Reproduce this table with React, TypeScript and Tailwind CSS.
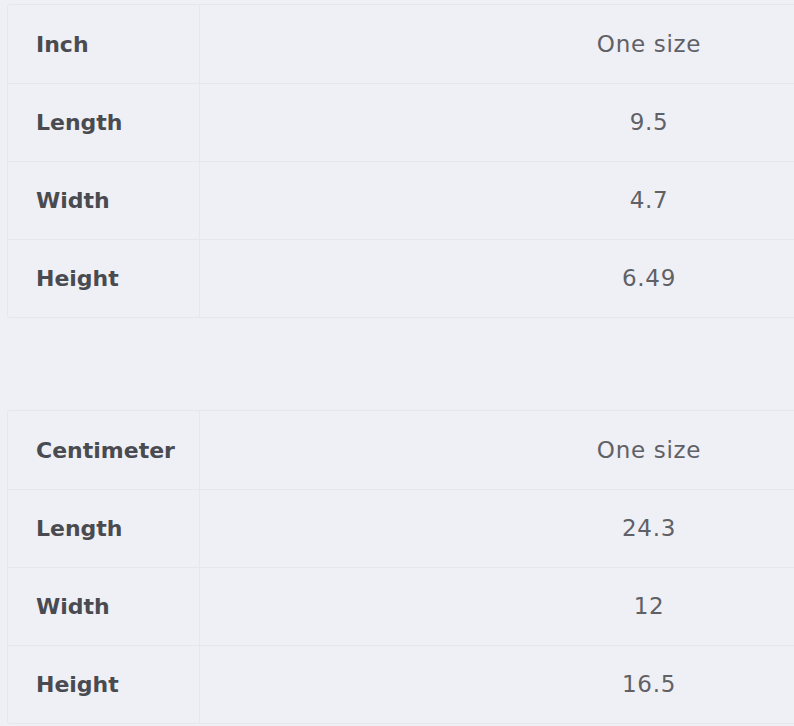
const tables = [
  {
    unit: "Inch",
    rows: [
      ["Length", "9.5"],
      ["Width", "4.7"],
      ["Height", "6.49"],
    ],
  },
  {
    unit: "Centimeter",
    rows: [
      ["Length", "24.3"],
      ["Width", "12"],
      ["Height", "16.5"],
    ],
  },
];

function SizeTable({ unit, rows }: { unit: string; rows: string[][] }) {
  const all = [[unit, "One size"], ...rows];
  return (
    <div className="w-[1092px] border border-[#e6e7ee] rounded-[3px]">
      {all.map(([label, value], i) => (
        <div
          key={label}
          className={`flex h-[78px] items-center ${i > 0 ? "border-t border-[#e6e7ee]" : ""}`}
        >
          <div className="flex h-full w-[192px] items-center border-r border-[#e6e7ee] pl-[28px] text-[22px] font-bold text-[#4a4b50]">
            {label}
          </div>
          <div className="flex-1 text-center text-[23px] tracking-[0.7px] text-[#606166]">
            {value}
          </div>
        </div>
      ))}
    </div>
  );
}

export default function App() {
  return (
    <div
      className="h-[726px] w-[794px] overflow-hidden bg-[#eff0f5] pl-[7px] pt-[4px]"
      style={{ fontFamily: "'DejaVu Sans', sans-serif" }}
    >
      <div className="flex flex-col gap-[92px]">
        {tables.map((t) => (
          <SizeTable key={t.unit} unit={t.unit} rows={t.rows} />
        ))}
      </div>
    </div>
  );
}
